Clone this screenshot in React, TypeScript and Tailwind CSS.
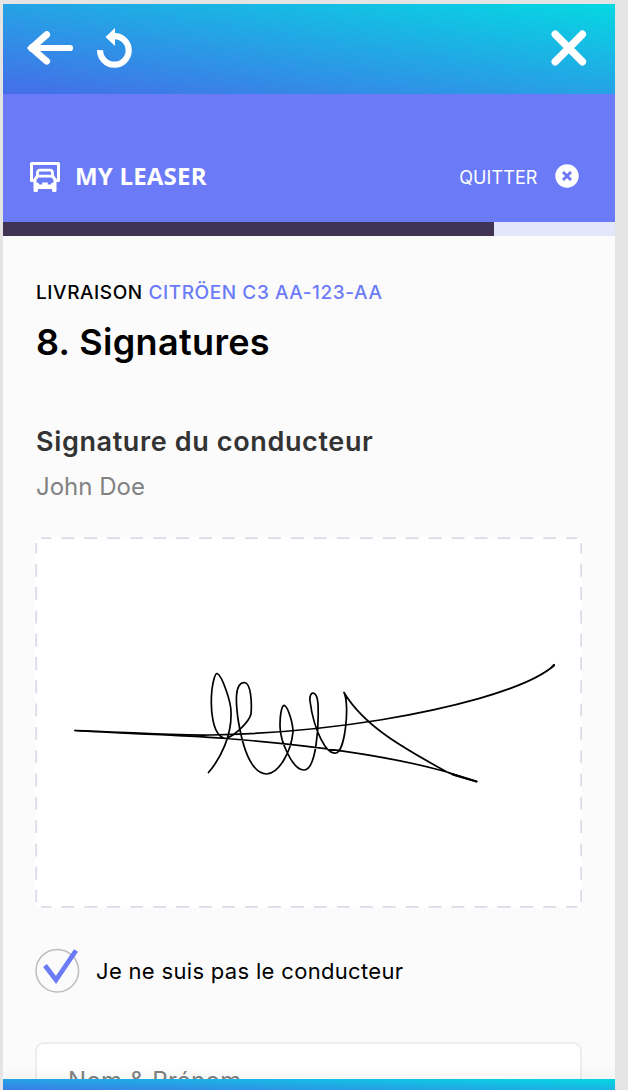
function BackIcon() {
  return (
    <svg width="47" height="34" viewBox="0 0 47 34" fill="none" stroke="#fff" strokeLinecap="round">
      <path d="M5 17H43" strokeWidth="6.2" />
      <path d="M19.7 3.6L4.6 17L19.7 30.2" strokeWidth="6.8" strokeLinejoin="round" />
      <path d="M0 17L4 12.5V21.5Z" fill="#fff" stroke="none" />
    </svg>
  )
}

function UndoIcon() {
  return (
    <svg width="35" height="41" viewBox="0 0 35 41" fill="none">
      <path d="M3.1 22.1A14.3 14.3 0 1 0 17.5 8.1" stroke="#fff" strokeWidth="6.2" />
      <path d="M8.5 9L18 0V18Z" fill="#fff" />
    </svg>
  )
}

function CloseIcon() {
  return (
    <svg width="36" height="36" viewBox="0 0 36 36" fill="none" stroke="#fff" strokeWidth="7.6" strokeLinecap="round">
      <path d="M4.3 4.3L31.3 31.7M31.3 4.3L4.3 31.7" />
    </svg>
  )
}

function TruckIcon() {
  return (
    <svg width="30" height="30" viewBox="0 0 30 30" fill="none">
      <path d="M4.5 18.5H1.5V1.5H28.5V18.5H25.5" stroke="#fff" strokeWidth="3" strokeLinejoin="round" />
      <path d="M7.5 14V10.8Q7.5 8.2 10.1 8.2H19.9Q22.5 8.2 22.5 10.8V14" stroke="#fff" strokeWidth="2.8" />
      <path
        fill="#fff"
        fillRule="evenodd"
        d="M6.5 12.8H23.5L26.5 17V28.5Q26.5 30 25 30H23.5Q22 30 22 28.5V27H8V28.5Q8 30 6.5 30H5Q3.5 30 3.5 28.5V17ZM8.5 15.6L6.5 18V20.6Q9 20.6 9.3 22.6H12.2V20.4H17.8V22.6H20.7Q21 20.6 23.5 20.6V18L21.5 15.6Z"
      />
    </svg>
  )
}

function QuitIcon() {
  return (
    <svg width="24" height="24" viewBox="0 0 24 24" fill="none">
      <circle cx="12" cy="12" r="11.7" fill="#fff" />
      <path d="M8 8L16 16M16 8L8 16" stroke="#6b7bf8" strokeWidth="3" />
    </svg>
  )
}

function SignaturePad() {
  return (
    <svg className="block" width="547" height="371" viewBox="35 537 547 371" fill="none">
      <rect x="35" y="537" width="547" height="371" rx="7" fill="#fff" />
      <g stroke="#d9dbe7" strokeWidth="1.8">
        <path d="M41 538.2H577" strokeDasharray="13 9.95" strokeDashoffset="2.6" />
        <path d="M41 906.9H577" strokeDasharray="13 9.95" strokeDashoffset="2.6" />
        <path d="M36.2 543V902" strokeDasharray="13 10.3" strokeDashoffset="2.5" />
        <path d="M581.2 543V902" strokeDasharray="13 10.3" strokeDashoffset="2.5" />
      </g>
      <g stroke="#000" strokeWidth="1.7" strokeLinecap="round" strokeLinejoin="round">
        <path d="M75 730.5C125 732 165 735.5 210 735C270 734 330 728 380 720C440 710 525 691 554 665.5" />
        <path d="M75 730.5C125 734 170 734 226 738.5C310 745 390 756 447 772L476.5 781.5C461 777 455 776 447 772C403 748 364 726 344 692.5C350 704 345 753 335.5 753C327 755 314 732 310 701C309 690 317 690 318 704C319 728 316 770 304 770C292 770 280 740 280 726C280 713 282 705 284.5 705.5C288 707 293 723 293 732C291 752 279 773.5 266.5 774C250 773 242 744 238 719C236 704 234 682.5 244.5 682.5C251 683 252 703 251 714C249 722 235 735.5 226 738.5C212 737 210 708 212 689C213 682 215 673 217 673.5C222 675 231 702 231 712C232 735 221 758 208.5 772.5" />
        <path d="M453 774.5L476.5 781.5M552 667L554 665" strokeWidth="2.2" />
      </g>
    </svg>
  )
}

function CheckMark() {
  return (
    <svg className="block" width="46" height="46" viewBox="34 947 46 46" fill="none">
      <circle cx="57.3" cy="970.7" r="21.3" stroke="#bdbdbd" strokeWidth="1.5" />
      <path d="M45 965.5L56 980L76 950.5" stroke="#6b7bf8" strokeWidth="4.8" />
    </svg>
  )
}

export default function App() {
  return (
    <div className="h-[1090px] w-[628px] overflow-hidden bg-[#e4e4e4] pt-1 pl-[3px] font-['Inter',sans-serif]">
      <div className="relative flex h-[1086px] w-[612px] flex-col overflow-hidden bg-[#fbfbfb]">
        <header className="flex h-[90px] shrink-0 items-start bg-[linear-gradient(to_top_right,#456de8,#05d8e2)] pl-6">
          <div className="mt-[27px]"><BackIcon /></div>
          <div className="mt-6 ml-[23px]"><UndoIcon /></div>
          <div className="mt-[26px] mr-7 ml-auto"><CloseIcon /></div>
        </header>

        <div className="flex h-32 shrink-0 items-center bg-[#6b7bf8] pt-9 pr-9 pl-[27px] text-white">
          <div className="pt-[2px]"><TruckIcon /></div>
          <span className="ml-[15px] font-['Open_Sans',sans-serif] text-[24px] font-bold tracking-[0.2px]">MY LEASER</span>
          <span className="ml-auto pt-[2px] text-[18px] tracking-[0.1px]">QUITTER</span>
          <div className="ml-[17.5px]"><QuitIcon /></div>
        </div>

        <div className="h-[13.5px] shrink-0 bg-[#e4e6fb]">
          <div className="h-full w-[491px] bg-[#403353]" />
        </div>

        <main className="flex flex-col pl-[33px] whitespace-nowrap">
          <p className="mt-[43.5px] text-[19px] leading-7 font-medium tracking-[0.58px] text-black">
            LIVRAISON <span className="text-[#6b7bf8]">CITRÖEN C3 AA-123-AA</span>
          </p>
          <h1 className="mt-[13px] text-[36px] leading-[44px] font-semibold tracking-[0.35px] text-black">8. Signatures</h1>
          <h2 className="mt-[60px] text-[27px] leading-9 font-semibold tracking-[0.63px] text-[#333]">Signature du conducteur</h2>
          <p className="mt-[11px] text-[24px] leading-8 text-[#828282]">John Doe</p>
          <div className="mt-[34px] -ml-px"><SignaturePad /></div>
          <label className="mt-[39px] -ml-[2px] flex items-center">
            <CheckMark />
            <span className="ml-4 pt-[2px] text-[22px] leading-8 tracking-[0.32px] text-black">Je ne suis pas le conducteur</span>
          </label>
          <div className="mt-[49px] -ml-px h-20 w-[547px] rounded-[9px] border-2 border-[#ededed] bg-white pt-[21px] pl-[31px] text-[24px] leading-8 tracking-[0.3px] text-[#828282]">
            Nom &amp; Prénom
          </div>
        </main>

        <footer className="absolute bottom-0 left-0 h-[11px] w-full bg-[linear-gradient(to_top_right,#456de8,#05d8e2)] bg-[length:100%_16px] shadow-[0_0_18px_rgba(0,0,0,0.08)]" />
      </div>
    </div>
  )
}
